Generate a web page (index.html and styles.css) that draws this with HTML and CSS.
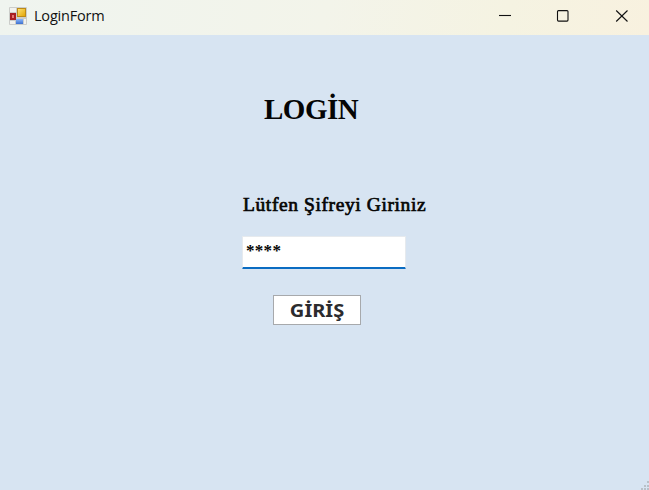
FILE: index.html
```
<!DOCTYPE html>
<html lang="tr">
<head>
<meta charset="utf-8">
<title>LoginForm</title>
<link rel="stylesheet" href="styles.css">
</head>
<body>
<div class="window">
  <header class="titlebar">
    <svg class="app-icon" width="18" height="18" viewBox="0 0 18 18">
      <defs>
        <linearGradient id="y" x2="1" y2="1"><stop stop-color="#ffe477"/><stop offset="1" stop-color="#e0a200"/></linearGradient>
        <linearGradient id="b" x2="0" y2="1"><stop stop-color="#8db8fb"/><stop offset="1" stop-color="#3c70cf"/></linearGradient>
      </defs>
      <rect width="18" height="18" rx="1" fill="#cbcdca"/>
      <path d="M1 1h6v4H1zM1 14h5v3H1zM15 12h2v5h-2z" fill="#f2f2ee"/>
      <rect x="1" y="6" width="6" height="7" fill="#a81f22"/>
      <rect x="3" y="8" width="2" height="3" fill="#e47570"/>
      <rect x="8.5" y="1.5" width="8" height="8" fill="url(#y)" stroke="#bd8a16"/>
      <rect x="7" y="12" width="7" height="5" fill="url(#b)"/>
    </svg>
    <span class="caption">LoginForm</span>
    <svg class="controls" width="129" height="12" viewBox="0 0 129 12" fill="none" stroke="#111" stroke-width="1.1">
      <path d="M0 5.5h12"/>
      <rect x="58.5" y=".6" width="10.5" height="10.5" rx="1"/>
      <path d="M117.2.5l11.3 11M128.5.5l-11.3 11"/>
    </svg>
  </header>
  <main class="form">
    <h1 class="heading">LOGİN</h1>
    <label class="prompt" for="password">Lütfen Şifreyi Giriniz</label>
    <input class="password" id="password" type="text" value="****">
    <button class="submit" type="button"><span class="submit-text">GİRİŞ</span></button>
    <svg class="grip" width="9" height="9" viewBox="0 0 9 9" fill="#b9c0c7"><path d="M7 0h2v2H7zM4 4h2v2H4zM7 4h2v2H7zM1 7h2v2H1zM4 7h2v2H4zM7 7h2v2H7z"/></svg>
  </main>
</div>
</body>
</html>
```
FILE: styles.css
```
* { box-sizing: border-box; }
body { margin: 0; overflow: hidden; }
.window {
  display: flex;
  flex-direction: column;
  width: 649px;
  height: 490px;
  background: #d7e4f2;
}
.titlebar {
  display: flex;
  align-items: center;
  height: 35px;
  padding: 0 21px 4px 9px;
  background: linear-gradient(100deg, #eff4ef 0%, #f3f4ea 50%, #f5f3e2 78%, #f8f1df 100%);
}
.caption {
  margin-left: 7px;
  font: 14.5px/20px "Open Sans", "Noto Sans", sans-serif;
  letter-spacing: -0.2px;
  color: #111;
}
.controls { margin-left: auto; }
.form {
  position: relative;
  flex: 1;
  display: flex;
  flex-direction: column;
  align-items: flex-start;
  padding: 57px 0 0 242px;
  color: #050505;
}
.heading {
  margin: 0 0 0 22px;
  font: bold 29px/34px "Liberation Serif", serif;
  letter-spacing: -0.5px;
}
.prompt {
  margin: 67px 0 0 1px;
  font: 19.5px/24px "Liberation Serif", serif;
  letter-spacing: 0.6px;
  -webkit-text-stroke: 0.7px #050505;
  white-space: nowrap;
}
.password {
  width: 164px;
  height: 33px;
  margin-top: 19px;
  padding: 0 3px 2px;
  border: 1px solid #e6eaee;
  border-bottom: 2px solid #0a6cc2;
  border-radius: 1px;
  outline: 0;
  background: #fff;
  color: #050505;
  font: bold 17px/24px "Liberation Serif", serif;
  letter-spacing: 0.3px;
}
.submit {
  width: 88px;
  height: 30px;
  margin: 26px 0 0 31px;
  padding: 2px 0 0;
  border: 1px solid #a7a9ac;
  background: #fff;
  color: #2b2b2e;
  font: bold 17px/26px "Noto Sans", sans-serif;
}
.submit-text {
  display: inline-block;
  transform: scaleX(1.18);
}
.grip { position: absolute; right: 0; bottom: 0; }
```
